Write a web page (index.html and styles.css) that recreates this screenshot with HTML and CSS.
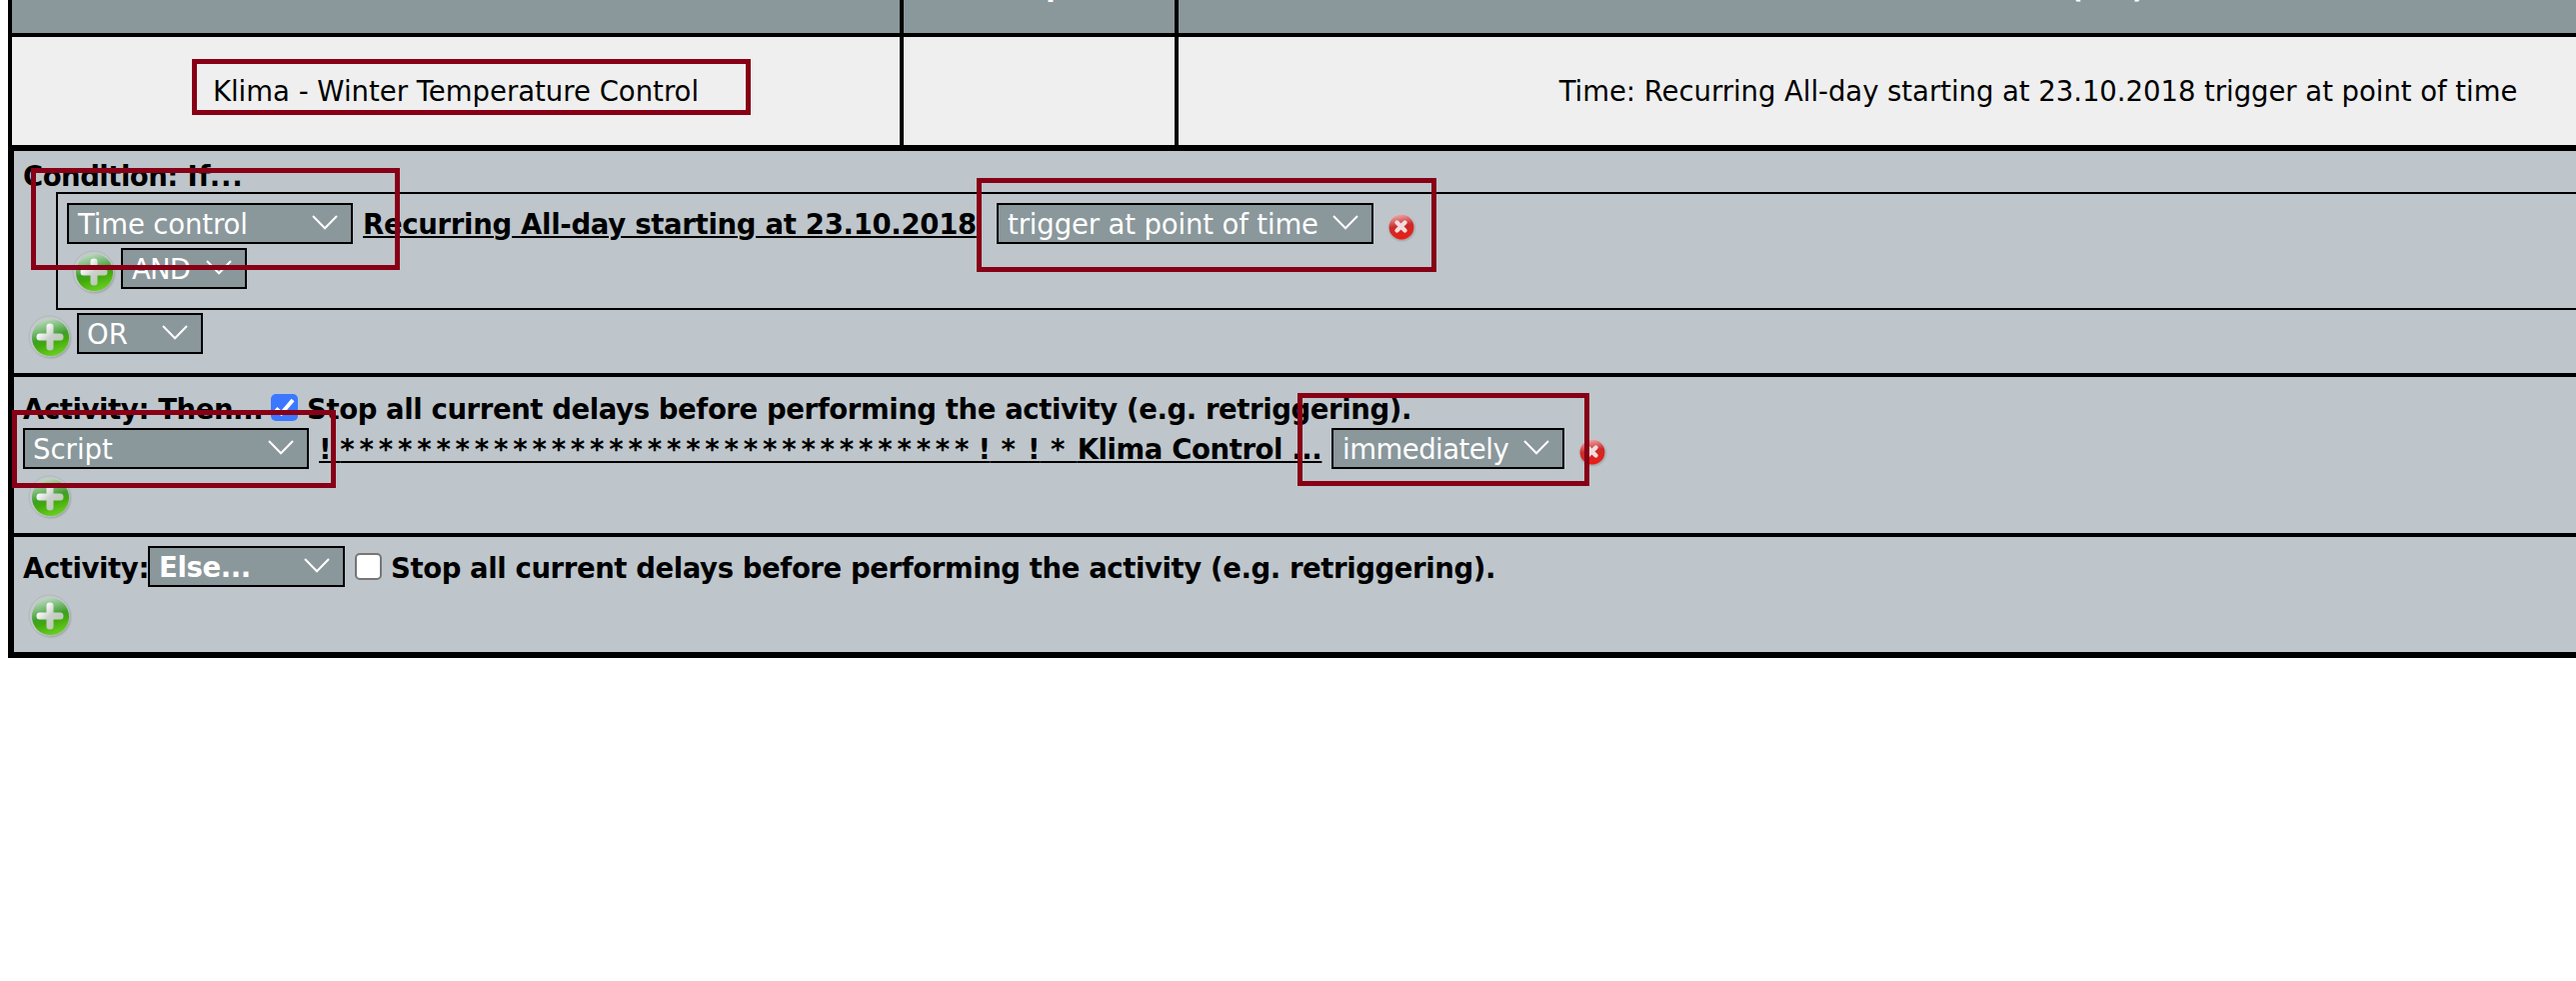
FILE: index.html
```html
<!DOCTYPE html>
<html lang="en">
<head>
<meta charset="utf-8">
<title>Program editor</title>
<link rel="stylesheet" href="styles.css">
</head>
<body>
<svg class="defs" width="0" height="0" aria-hidden="true">
  <defs>
    <linearGradient id="green" x1="0.3" y1="0" x2="0.6" y2="1">
      <stop offset="0" stop-color="#c0dcc4"/><stop offset="0.25" stop-color="#82be80"/><stop offset="0.5" stop-color="#3d9f28"/><stop offset="0.65" stop-color="#43aa0c"/><stop offset="1" stop-color="#6bd024"/>
    </linearGradient>
    <linearGradient id="cross" x1="0" y1="0" x2="1" y2="1">
      <stop offset="0.2" stop-color="#ffffff"/><stop offset="0.5" stop-color="#ccd0cc"/><stop offset="0.8" stop-color="#bccab6"/>
    </linearGradient>
    <linearGradient id="red" x1="0.4" y1="0" x2="0.6" y2="1">
      <stop offset="0" stop-color="#eda9aa"/><stop offset="0.45" stop-color="#c92c2c"/><stop offset="1" stop-color="#ee1c14"/>
    </linearGradient>
    <radialGradient id="rim">
      <stop offset="0.8" stop-color="#8c9391"/><stop offset="0.9" stop-color="#a2a8a8" stop-opacity="0.8"/><stop offset="1" stop-color="#b4bbbe" stop-opacity="0"/>
    </radialGradient>
    <filter id="soft"><feGaussianBlur stdDeviation="0.7"/></filter>
    <symbol id="plus" viewBox="0 0 46 46">
      <circle cx="23.8" cy="24" r="22" fill="url(#rim)"/>
      <circle cx="22.5" cy="22.5" r="20.5" fill="#c3c9cb" stroke="#b0b7b9" stroke-width="1"/>
      <g filter="url(#soft)">
        <circle cx="23.5" cy="23.5" r="18.6" fill="url(#green)"/>
        <path d="M19.500 12.500q0-3 3.500-3t3.500 3v7h7q3 0 3 3.500t-3 3.500h-7v7q0 3-3.500 3t-3.500-3v-7h-7q-3 0-3-3.500t3-3.500h7z" fill="url(#cross)"/>
      </g>
    </symbol>
    <symbol id="remove" viewBox="0 0 32 32">
      <circle cx="16.5" cy="16.8" r="15" fill="url(#rim)" opacity="0.6"/>
      <circle cx="16" cy="15" r="13" fill="#c6c6ca"/>
      <g filter="url(#soft)">
        <circle cx="16" cy="16" r="12.5" fill="url(#red)"/>
        <path d="M11.500 11.500l8 8M19.500 11.500l-8 8" stroke="#f1dddd" stroke-width="4.4" stroke-linecap="round"/>
      </g>
    </symbol>
    <symbol id="chevron" viewBox="0 0 26 15">
      <path d="M1 1l12 12.300L25 1" fill="none" stroke="#fff" stroke-width="2"/>
    </symbol>
  </defs>
</svg>

<div class="page">
  <div class="table">
    <div class="row head">
      <div class="cell name"></div>
      <div class="cell desc"><span class="h-desc">Description</span></div>
      <div class="cell cond"><span class="h-cond">Condition (if...)</span></div>
    </div>
    <div class="row body">
      <div class="cell name"><span class="t-name">Klima - Winter Temperature Control</span></div>
      <div class="cell desc"></div>
      <div class="cell cond"><span class="t-cond">Time: Recurring All-day starting at 23.10.2018 trigger at point of time</span></div>
    </div>
  </div>

  <div class="panel">
    <section class="rule if">
      <div class="title"><span class="t-condition">Condition:</span> <span class="t-if">If...</span></div>
      <div class="group">
        <div class="line">
          <div class="select w-type"><span class="t-tc">Time control</span><svg class="chev"><use href="#chevron"/></svg></div>
          <a class="link l-time"><span class="t-link1">Recurring All-day starting at 23.10.2018</span></a>
          <div class="select w-trigger"><span class="t-trig">trigger at point of time</span><svg class="chev"><use href="#chevron"/></svg></div>
          <svg class="remove"><use href="#remove"/></svg>
        </div>
        <div class="line and">
          <svg class="plus"><use href="#plus"/></svg>
          <div class="select w-op"><span class="t-and">AND</span><svg class="chev"><use href="#chevron"/></svg></div>
        </div>
      </div>
      <div class="line or">
        <svg class="plus"><use href="#plus"/></svg>
        <div class="select w-op"><span class="t-or">OR</span><svg class="chev"><use href="#chevron"/></svg></div>
      </div>
    </section>

    <section class="rule then">
      <div class="line opts">
        <span class="label l-then"><span class="t-bold">Activity: Then...</span></span>
        <span class="check on"><svg viewBox="0 0 27 27"><path d="M5 14.500l5.500 5L22 6" fill="none" stroke="#fff" stroke-width="4"/></svg></span>
        <span class="label"><span class="t-bold">Stop all current delays before performing the activity (e.g. retriggering).</span></span>
      </div>
      <div class="line script">
        <div class="select w-type"><span class="t-script">Script</span><svg class="chev"><use href="#chevron"/></svg></div>
        <a class="link l-script"><span class="t-link2">! <span class="stars">*********************************</span> !<span class="star"> * </span>!<span class="star"> * </span>Klima Control ...</span></a>
        <div class="select w-now"><span class="t-now">immediately</span><svg class="chev"><use href="#chevron"/></svg></div>
        <svg class="remove"><use href="#remove"/></svg>
      </div>
      <svg class="plus add"><use href="#plus"/></svg>
    </section>

    <section class="rule else">
      <div class="line">
        <span class="label l-else"><span class="t-bold">Activity:</span></span>
        <div class="select w-else"><span class="t-bold">Else...</span><svg class="chev"><use href="#chevron"/></svg></div>
        <span class="check"></span>
        <span class="label"><span class="t-bold">Stop all current delays before performing the activity (e.g. retriggering).</span></span>
      </div>
      <svg class="plus add"><use href="#plus"/></svg>
    </section>
  </div>

  <div class="mark m-name"></div>
  <div class="mark m-type"></div>
  <div class="mark m-trigger"></div>
  <div class="mark m-script"></div>
  <div class="mark m-now"></div>
</div>
</body>
</html>
```
FILE: styles.css
```css
* { box-sizing: border-box; }
body {
  margin: 0;
  background: #fff;
  color: #000;
  font: 27.5px/32px Verdana, "DejaVu Sans", sans-serif;
  white-space: nowrap;
}
.defs { position: absolute; }
.page { position: relative; width: 2577px; height: 981px; overflow: hidden; }

/* Program overview table */
.table { margin-left: 8px; width: 2892px; border-left: 4px solid #000; }
.row { display: flex; }
.cell { display: flex; justify-content: center; border-right: 4px solid #000; }
.name { width: 892px; }
.desc { width: 275px; }
.cond { width: 1721px; }
.head { height: 37px; background: #8a979b; border-bottom: 4px solid #000; color: #fff; font-weight: bold; }
.head span { height: 32px; }
.head .h-desc { margin: -30px 3px 0 0; }
.head .h-cond { margin: -28px 14px 0 0; letter-spacing: -0.3px; }
.body { height: 108px; background: #efefef; align-items: stretch; }
.body .cell { align-items: center; }

/* Rule editor */
.panel {
  margin-left: 8px;
  width: 2900px;
  border: 6px solid #000;
  background: #bec6cc;
}
.rule { border-bottom: 4px solid #000; }
.rule:last-child { border-bottom: 0; }
.if { height: 226px; padding: 9px 0 0 9px; }
.then { height: 160px; padding: 16px 0 0 9px; }
.else { height: 115px; padding: 9px 0 0 9px; }
.title, .label, .link { font-weight: bold; }
.title { height: 32px; line-height: 32px; }
.group { margin-left: 33px; height: 118px; border: 2px solid #000; padding: 9px 0 0 9px; }
.line { display: flex; height: 41px; align-items: center; }
.link { text-decoration: underline; text-decoration-thickness: 2px; text-underline-offset: 2px; }
.l-time { width: 634px; margin-left: 10px; }
.l-script { width: 1013px; margin-left: 10px; }

/* Tracking per label */
.t-bold { letter-spacing: -0.4px; }
.t-condition { letter-spacing: -0.5px; }
.t-if { letter-spacing: 0.8px; }
.t-cond { letter-spacing: -0.04px; margin-left: 3px; }
.t-tc, .t-trig { letter-spacing: -0.14px; }
.t-link1 { letter-spacing: -0.3px; }
.t-link2 { letter-spacing: -0.4px; }
.stars { letter-spacing: 4.83px; margin-right: -5px; }
.star { letter-spacing: 1.3px; }
.t-now { letter-spacing: -0.5px; }
.t-and { letter-spacing: -0.8px; }
.t-script, .t-or { margin-left: -1px; }

.select {
  display: flex;
  align-items: center;
  justify-content: space-between;
  height: 41px;
  border: 2px solid #000;
  background: #8a979b;
  color: #fff;
  padding: 0 13px 0 9px;
}
.w-type { width: 286px; }
.w-trigger { width: 377px; }
.w-op { width: 126px; }
.w-now { width: 233px; }
.w-else { width: 197px; font-weight: bold; }
.chev { width: 26px; height: 15px; flex: none; margin-top: -2px; }

.plus { width: 46px; height: 46px; flex: none; display: block; }
.remove { width: 32px; height: 32px; flex: none; margin: 6px 0 0 12px; }
.and { margin-top: 4px; padding-left: 4px; }
.and .plus, .or .plus { margin: 6px 4px 0 0; }
.or { margin-top: 3px; padding-left: 4px; }
.opts { height: 32px; }
.l-then { width: 248px; }
.l-else { width: 125px; }
.else .label { padding-top: 2px; }
.add { margin: 5px 0 0 4px; }
.then .script { margin-top: 3px; }
.else .add { margin-top: 6px; }

.check {
  width: 27px;
  height: 27px;
  flex: none;
  margin-right: 9px;
  border: 2px solid #767676;
  border-radius: 5px;
  background: #fff;
}
.check.on { border: 0; background: #3b78ff; margin-top: -3px; }
.check svg { display: block; }
.w-else + .check { margin-left: 10px; }

/* Highlight frames laid over the editor */
.mark { position: absolute; border: 5px solid #870016; }
.m-name { left: 192px; top: 59px; width: 559px; height: 56px; }
.m-type { left: 31px; top: 168px; width: 369px; height: 102px; }
.m-trigger { left: 977px; top: 178px; width: 460px; height: 94px; }
.m-script { left: 12px; top: 410px; width: 324px; height: 78px; }
.m-now { left: 1298px; top: 393px; width: 292px; height: 93px; }
```
